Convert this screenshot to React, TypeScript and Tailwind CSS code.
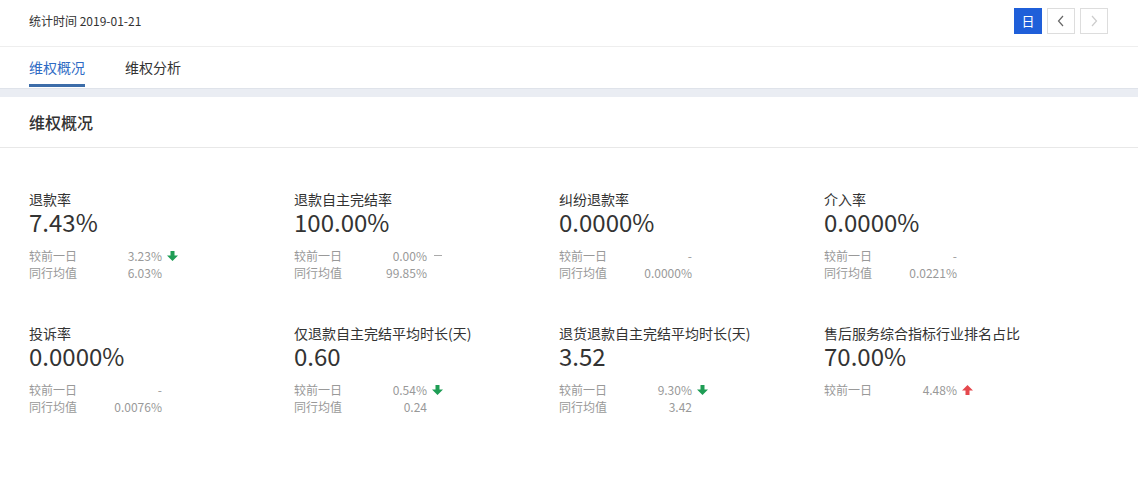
import React from "react"

type Metric = {
  title: string
  value: string
  prev: string
  trend?: "down" | "up" | "flat"
  avg?: string
}

const metrics: Metric[] = [
  { title: "退款率", value: "7.43%", prev: "3.23%", trend: "down", avg: "6.03%" },
  { title: "退款自主完结率", value: "100.00%", prev: "0.00%", trend: "flat", avg: "99.85%" },
  { title: "纠纷退款率", value: "0.0000%", prev: "-", avg: "0.0000%" },
  { title: "介入率", value: "0.0000%", prev: "-", avg: "0.0221%" },
  { title: "投诉率", value: "0.0000%", prev: "-", avg: "0.0076%" },
  { title: "仅退款自主完结平均时长(天)", value: "0.60", prev: "0.54%", trend: "down", avg: "0.24" },
  { title: "退货退款自主完结平均时长(天)", value: "3.52", prev: "9.30%", trend: "down", avg: "3.42" },
  { title: "售后服务综合指标行业排名占比", value: "70.00%", prev: "4.48%", trend: "up" },
]

function Trend({ kind }: { kind?: Metric["trend"] }) {
  if (kind === "down")
    return (
      <svg width="11" height="10" viewBox="0 0 11 10" className="ml-[5px]">
        <path d="M3.5 0h4v4.5H11L5.5 10 0 4.5h3.5z" fill="#1f9d55" />
      </svg>
    )
  if (kind === "up")
    return (
      <svg width="11" height="10" viewBox="0 0 11 10" className="ml-[5px]">
        <path d="M3.5 10h4V5.5H11L5.5 0 0 5.5h3.5z" fill="#e5484d" />
      </svg>
    )
  if (kind === "flat") return <span className="ml-[7px] h-px w-[8px] bg-[#aaa]" />
  return null
}

function Row({ label, value, trend }: { label: string; value: string; trend?: Metric["trend"] }) {
  return (
    <div className="flex items-center h-[17px] leading-[17px]">
      <span className="w-[60px]">{label}</span>
      <span className="w-[73px] text-right">{value}</span>
      <Trend kind={trend} />
    </div>
  )
}

function Card({ m }: { m: Metric }) {
  return (
    <div className="h-[92px]">
      <div className="text-[14px] leading-[20px] text-[#333]">{m.title}</div>
      <div className="text-[24px] leading-[26px] text-[#333]">{m.value}</div>
      <div className="mt-[12px] text-[12px] text-[#999]">
        <Row label="较前一日" value={m.prev} trend={m.trend} />
        {m.avg && <Row label="同行均值" value={m.avg} />}
      </div>
    </div>
  )
}

export default function App() {
  return (
    <div
      className="w-[1138px] h-[479px] bg-white overflow-hidden"
      style={{ fontFamily: '"Noto Sans CJK SC", "Noto Sans", sans-serif' }}
    >
      {/* top bar */}
      <div className="h-[47px] flex items-center justify-between pl-[29px] pr-[30px] border-b border-[#eeeeee]">
        <span className="text-[12px] text-[#333] -mt-[5px]">统计时间 2019-01-21</span>
        <div className="flex gap-[5px] -mt-[4px]">
          <button className="w-[28px] h-[26px] bg-[#1f5fd9] text-white text-[13px] flex items-center justify-center">日</button>
          <button className="w-[28px] h-[26px] border border-[#dddddd] flex items-center justify-center">
            <svg width="8" height="12" viewBox="0 0 8 12"><path d="M6 1L1.5 6 6 11" fill="none" stroke="#666" strokeWidth="1.2" /></svg>
          </button>
          <button className="w-[28px] h-[26px] border border-[#dddddd] flex items-center justify-center">
            <svg width="8" height="12" viewBox="0 0 8 12"><path d="M2 1l4.5 5L2 11" fill="none" stroke="#ccc" strokeWidth="1.2" /></svg>
          </button>
        </div>
      </div>

      {/* tabs */}
      <div className="h-[41px] flex gap-[40px] pl-[29px]">
        <div className="relative flex items-center text-[14px] text-[#2f6bc4]">
          维权概况
          <span className="absolute left-0 right-0 bottom-[1px] h-[3px] bg-[#3d6da9]" />
        </div>
        <div className="flex items-center text-[14px] text-[#333]">维权分析</div>
      </div>

      <div className="h-[9px] bg-[#eaedf3] border-t border-[#dfe3ea]" />

      {/* section title */}
      <div className="h-[51px] flex items-center pl-[29px] border-b border-[#e8e8e8]">
        <span className="text-[16px] font-medium text-[#333]">维权概况</span>
      </div>

      {/* metrics */}
      <div className="grid grid-cols-[265px_265px_265px_265px] gap-y-[42px] pl-[29px] pt-[41px]">
        {metrics.map((m) => (
          <Card key={m.title} m={m} />
        ))}
      </div>
    </div>
  )
}
